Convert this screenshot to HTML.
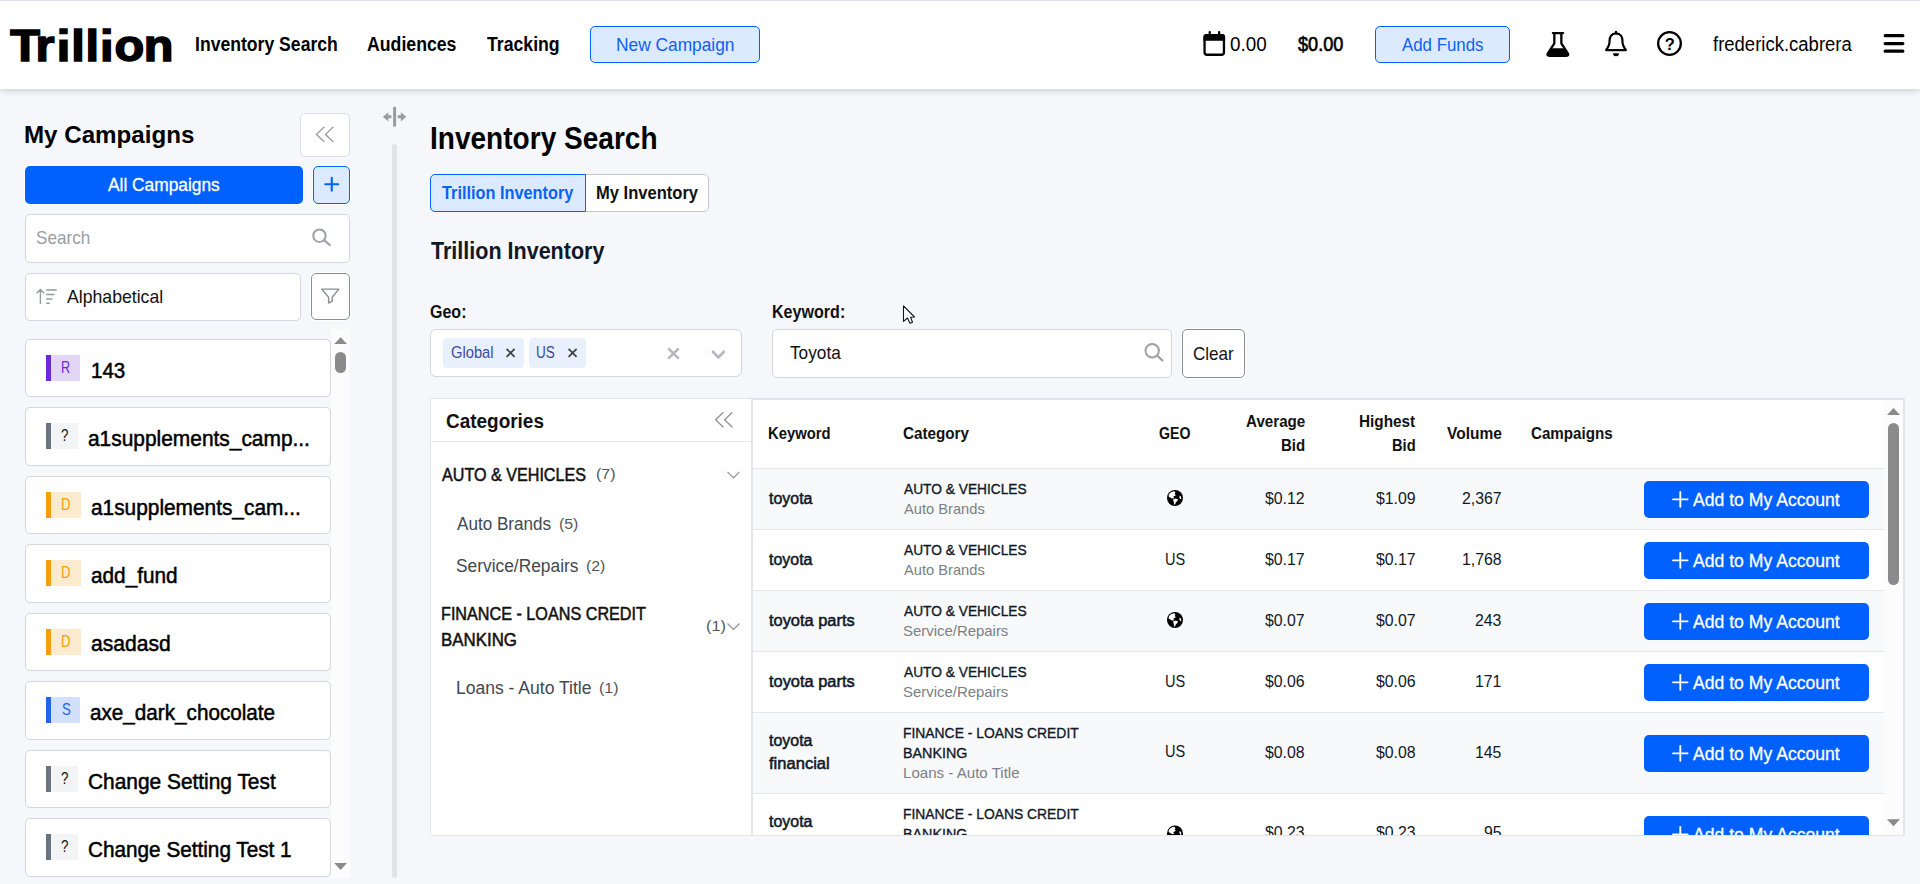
<!DOCTYPE html>
<html lang="en">
<head>
<meta charset="utf-8">
<title>Trillion - Inventory Search</title>
<style>
*{box-sizing:border-box;margin:0;padding:0}
html,body{width:1920px;height:884px;overflow:hidden}
body{background:#f5f7fb;font-family:"Liberation Sans",sans-serif;color:#000;position:relative}
.a{position:absolute}
.t{position:absolute;white-space:nowrap;line-height:1;transform-origin:0 0}
svg{position:absolute;overflow:visible}
.box{position:absolute;background:#fff;border:1px solid #d3d6dc;border-radius:5px}
.camp{position:absolute;left:25px;width:306px;height:58px;background:#fff;border:1px solid #d3d6dc;border-radius:5px}
.bar{position:absolute;left:45.75px;width:5.5px;height:26px}
.tag{position:absolute;left:51.25px;height:26px}
.row{position:absolute;left:753px;width:1131px;border-top:1px solid #e4e6eb}
.odd{background:#f8f9fb}
.even{background:#fff}
.ab{position:absolute;left:1644px;width:225px;height:37px;background:#0061ff;border-radius:5px}
</style>
</head>
<body>

<!-- ================= HEADER ================= -->
<div class="a" style="left:0;top:0;width:1920px;height:89px;background:#fff;border-top:1px solid #dfe0e5;box-shadow:0 0 8px rgba(0,0,0,.25)"></div>
<svg style="left:0;top:20px" width="180" height="50" viewBox="0 0 180 50">
  <text transform="scale(1.08 1)" x="9.49 32.96 52.6 65.9 79.17 92.5 106 133.2" y="41.1" font-family="Liberation Sans, sans-serif" font-weight="bold" font-size="45" fill="#000" stroke="#000" stroke-width="1.6" stroke-linejoin="miter">Trillion</text>
  <path d="M58 15.1H69.5V19.4H58zM101 15.1H112V19.4H101z" fill="#fff"/>
</svg>
<div class="a" style="left:590px;top:26px;width:170px;height:37px;border:1px solid #0061ff;background:#dbeafe;border-radius:5px"></div>
<div class="a" style="left:1375px;top:26px;width:135px;height:37px;border:1px solid #0061ff;background:#dbeafe;border-radius:5px"></div>

<!-- header icons -->
<svg style="left:1202px;top:30px" width="25" height="27" viewBox="0 0 25 27">
  <rect x="2.55" y="5.1" width="19.4" height="19.65" rx="2.6" fill="none" stroke="#000" stroke-width="2.3"/>
  <path d="M1.4 10.7V7a3 3 0 0 1 3-3H20.1a3 3 0 0 1 3 3v3.7z" fill="#000"/>
  <rect x="6.6" y="1" width="2.3" height="5" rx="1.1" fill="#000"/>
  <rect x="16" y="1" width="2.3" height="5" rx="1.1" fill="#000"/>
</svg>
<svg style="left:1545px;top:30px" width="26" height="28" viewBox="0 0 26 28">
  <path d="M7.9 3.05H18.1" stroke="#000" stroke-width="2.3" stroke-linecap="round" fill="none"/>
  <path d="M9.35 3.5V13.3L2.9 23.3Q1.6 25.75 4.4 25.75H21.3Q24.1 25.75 22.8 23.3L16.35 13.3V3.5" stroke="#000" stroke-width="2.3" stroke-linejoin="round" fill="none"/>
  <path d="M6.2 18.2H19.5L22.9 23.4Q24 25.8 21.3 25.8H4.4Q1.7 25.8 2.8 23.4Z" fill="#000"/>
</svg>
<svg style="left:1603px;top:30px" width="26" height="28" viewBox="0 0 26 28">
  <path d="M13 3.3C8.4 3.3 6.6 6.9 6.6 10.6C6.6 14.9 5.6 17.2 3.3 19.5V20.2H22.7V19.5C20.4 17.2 19.4 14.9 19.4 10.6C19.4 6.9 17.6 3.3 13 3.3Z" stroke="#000" stroke-width="2.2" stroke-linejoin="round" fill="none"/>
  <path d="M13 1.9V3.3" stroke="#000" stroke-width="2.4" stroke-linecap="round"/>
  <path d="M10 23.2H16A3 3 0 0 1 10 23.2Z" fill="#000"/>
</svg>
<svg style="left:1656px;top:30px" width="28" height="28" viewBox="0 0 28 28">
  <circle cx="13.5" cy="13.5" r="11.35" fill="none" stroke="#000" stroke-width="2.3"/>
</svg>
<svg style="left:1882px;top:32px" width="24" height="24" viewBox="0 0 24 24">
  <path d="M3.2 3.7H20.8M3.2 11.6H20.8M3.2 19.2H20.8" stroke="#000" stroke-width="3.3" stroke-linecap="round"/>
</svg>

<!-- ================= SIDEBAR ================= -->
<div class="box" style="left:300px;top:113px;width:50px;height:44px;border-color:#dcdfe4"></div>
<svg style="left:0;top:0" width="420" height="884" viewBox="0 0 420 884">
  <path d="M324.3 126.9L316.5 134.4L324.3 141.9M333.3 126.9L325.5 134.4L333.3 141.9" stroke="#8e9197" stroke-width="1.3" fill="none"/>
</svg>
<div class="a" style="left:25px;top:166px;width:278px;height:38px;background:#0061ff;border-radius:5px;box-shadow:0 0 0 1px rgba(255,255,255,.85)"></div>
<div class="a" style="left:313px;top:166px;width:37px;height:38px;background:#dbeafe;border:1px solid #0061ff;border-radius:5px;box-shadow:0 0 0 1px rgba(255,255,255,.85)"></div>
<svg style="left:0;top:0" width="420" height="884" viewBox="0 0 420 884">
  <path d="M325.3 184.3H338.2M331.75 177.9V190.8" stroke="#0061ff" stroke-width="2.1" stroke-linecap="round" fill="none"/>
</svg>
<div class="box" style="left:25px;top:214px;width:325px;height:48.5px"></div>
<svg style="left:0;top:0" width="420" height="884" viewBox="0 0 420 884">
  <circle cx="319.45" cy="235.7" r="6.2" fill="none" stroke="#9ea1a7" stroke-width="2"/>
  <path d="M323.9 240.1L329.8 245" stroke="#9ea1a7" stroke-width="2.2" stroke-linecap="round"/>
</svg>
<div class="box" style="left:25px;top:273px;width:276px;height:48px"></div>
<svg style="left:0;top:0" width="420" height="884" viewBox="0 0 420 884">
  <path d="M40.4 289.6V303.9M36.7 293.3L40.4 289.6L44.1 293.3M46.2 290H56.7M46.2 294.5H54.5M46.2 299H52.4M46.2 303.3H49.8" stroke="#979aa0" stroke-width="1.4" fill="none"/>
</svg>
<div class="box" style="left:311px;top:273px;width:39px;height:47px;border-color:#8a8d93;box-shadow:0 0 0 1px rgba(255,255,255,.85)"></div>
<svg style="left:0;top:0" width="420" height="884" viewBox="0 0 420 884">
  <path d="M321.7 289.1H338.9L332.2 297.2V301.2L328.6 303V297.2Z" stroke="#8b8e94" stroke-width="1.4" stroke-linejoin="round" fill="none"/>
</svg>

<!-- list scrollbar -->
<div class="a" style="left:331.25px;top:329.25px;width:18.25px;height:548.25px;background:#fcfcfc"></div>
<div class="a" style="left:335px;top:351.75px;width:11.25px;height:21.25px;background:#8a8a8a;border-radius:6px"></div>
<svg style="left:0;top:0" width="420" height="884" viewBox="0 0 420 884">
  <path d="M334.25 344H347L340.6 337.25Z" fill="#8a8a8a"/>
  <path d="M334.25 863H347L340.6 870Z" fill="#8a8a8a"/>
</svg>

<div class="camp" style="top:339px"></div>
<div class="camp" style="top:407px;height:59px"></div>
<div class="camp" style="top:476px"></div>
<div class="camp" style="top:544px;height:59px"></div>
<div class="camp" style="top:613px"></div>
<div class="camp" style="top:681px;height:59px"></div>
<div class="camp" style="top:750px"></div>
<div class="camp" style="top:818px;height:59px"></div>

<div class="bar" style="top:355px;background:#6d28d9"></div><div class="tag" style="top:355px;width:28.75px;background:#e2d6f7"></div>
<div class="bar" style="top:423px;background:#6b7280"></div><div class="tag" style="top:423px;width:26.75px;background:#f3f4f6"></div>
<div class="bar" style="top:491.75px;background:#f59e0b"></div><div class="tag" style="top:491.75px;width:29.5px;background:#fdebd0"></div>
<div class="bar" style="top:560.25px;background:#f59e0b"></div><div class="tag" style="top:560.25px;width:29.5px;background:#fdebd0"></div>
<div class="bar" style="top:629px;background:#f59e0b"></div><div class="tag" style="top:629px;width:29.5px;background:#fdebd0"></div>
<div class="bar" style="top:697px;background:#2563eb"></div><div class="tag" style="top:697px;width:28.75px;background:#d3e0fb"></div>
<div class="bar" style="top:766px;background:#6b7280"></div><div class="tag" style="top:766px;width:26.75px;background:#f3f4f6"></div>
<div class="bar" style="top:834px;background:#6b7280"></div><div class="tag" style="top:834px;width:26.75px;background:#f3f4f6"></div>

<!-- splitter -->
<div class="a" style="left:392px;top:144px;width:5px;height:734px;background:#e3e3e6;border-radius:2.5px"></div>
<svg style="left:0;top:0" width="420" height="884" viewBox="0 0 420 884">
  <rect x="393.1" y="106.8" width="3" height="20" rx="1.2" fill="#9b9b9b"/>
  <path d="M382.9 116.8L388.3 112.2V115.3H391.4V118.3H388.3V121.4Z" fill="#9b9b9b"/>
  <path d="M406.3 116.8L400.9 112.2V115.3H397.8V118.3H400.9V121.4Z" fill="#9b9b9b"/>
</svg>

<!-- ================= MAIN ================= -->
<div class="a" style="left:585px;top:174.25px;width:124px;height:37.5px;background:#fff;border:1px solid #c4c7cd;border-radius:0 5px 5px 0"></div>
<div class="a" style="left:430px;top:174.25px;width:155.5px;height:37.5px;background:#dbeafe;border:1px solid #0061ff;border-radius:5px 0 0 5px"></div>

<div class="box" style="left:430px;top:329px;width:312px;height:48px;border-radius:6px"></div>
<div class="a" style="left:443px;top:338px;width:80.75px;height:30px;background:#e9f0fd;border-radius:4px"></div>
<div class="a" style="left:529.25px;top:338px;width:56.5px;height:30px;background:#e9f0fd;border-radius:4px"></div>
<div class="box" style="left:772px;top:329px;width:400px;height:48.5px"></div>
<div class="box" style="left:1182px;top:329px;width:63px;height:49px;border-color:#8a8d93;box-shadow:0 0 0 1px rgba(255,255,255,.85)"></div>
<svg style="left:420px;top:320px" width="840" height="70" viewBox="420 320 840 70">
  <path d="M506.6 348.9L514.6 356.9M514.6 348.9L506.6 356.9M568.6 348.9L576.6 356.9M576.6 348.9L568.6 356.9" stroke="#3f4348" stroke-width="1.8" fill="none"/>
  <path d="M668.3 348.3L678.7 358.7M678.7 348.3L668.3 358.7" stroke="#b5b7bc" stroke-width="2.6" fill="none"/>
  <path d="M712.2 351L718.4 357.4L724.6 351" stroke="#b5b7bc" stroke-width="2.6" fill="none"/>
  <circle cx="1152.2" cy="350.7" r="6.7" fill="none" stroke="#9ea1a7" stroke-width="2"/>
  <path d="M1157 355.5L1162.4 360.4" stroke="#9ea1a7" stroke-width="2.2" stroke-linecap="round"/>
</svg>

<!-- table container -->
<div class="a" style="left:430px;top:398px;width:1475px;height:438px;background:#fff;border:1px solid #e3e5ea"></div>
<div class="a" style="left:751px;top:399px;width:1153px;height:436px;border:1px solid #e3e5ea;border-width:1px 1px 0 2px"></div>
<div class="a" style="left:431px;top:441px;width:320px;height:1px;background:#e4e6eb"></div>
<svg style="left:420px;top:390px" width="340" height="450" viewBox="420 390 340 450">
  <path d="M723.4 412.25L715.6 419.75L723.4 427.25M732.4 412.25L724.6 419.75L732.4 427.25" stroke="#8e9197" stroke-width="1.3" fill="none"/>
  <path d="M727.5 471.8L733.5 477.8L739.5 471.8M727.5 623.5L733.5 629.5L739.5 623.5" stroke="#8e9197" stroke-width="1.2" fill="none"/>
</svg>

<!-- rows -->
<div class="row odd" style="top:468px;height:61px"></div>
<div class="row even" style="top:529px;height:61px"></div>
<div class="row odd" style="top:590px;height:61px"></div>
<div class="row even" style="top:651px;height:61px"></div>
<div class="row odd" style="top:712px;height:81px"></div>
<div class="row even" style="top:793px;height:42px"></div>
<div class="ab" style="top:481px"></div>
<div class="ab" style="top:542px"></div>
<div class="ab" style="top:603px"></div>
<div class="ab" style="top:664px"></div>
<div class="ab" style="top:735px"></div>
<svg style="left:1640px;top:470px" width="240" height="370" viewBox="1640 470 240 370">
  <path d="M1673 499.35H1687.6M1680.3 492V506.7 M1673 560.35H1687.6M1680.3 553V567.7 M1673 621.35H1687.6M1680.3 614V628.7 M1673 682.35H1687.6M1680.3 675V689.7 M1673 753.35H1687.6M1680.3 746V760.7" stroke="#fff" stroke-width="1.9" stroke-linecap="round" fill="none"/>
</svg>
<!-- globes -->
<svg style="left:1165px;top:488px" width="20" height="20" viewBox="-10 -10 20 20"><g id="globe">
  <circle r="8" fill="#000"/>
  <path d="M-6.3 -1.5C-6.6 -4 -4 -6.6 -0.6 -6.7L0.5 -5.2L-0.4 -3.9L0.9 -2.7L-1.8 -1.2L-0.6 0.3L-3.2 0.6Z" fill="#fff"/>
  <path d="M-2 1.6L0.8 0.6L3 1.5L2.2 3.3L0.8 4.2L0 6.8L-0.8 6.6L-1.2 4Z" fill="#fff"/>
  <path d="M4.6 -2.6L5.9 -1.6L6.4 1L5.4 1.3L4.4 -0.6Z" fill="#fff"/>
</g></svg>
<svg style="left:1165px;top:610px" width="20" height="20" viewBox="-10 -10 20 20">
  <circle r="8" fill="#000"/>
  <path d="M-6.3 -1.5C-6.6 -4 -4 -6.6 -0.6 -6.7L0.5 -5.2L-0.4 -3.9L0.9 -2.7L-1.8 -1.2L-0.6 0.3L-3.2 0.6Z" fill="#fff"/>
  <path d="M-2 1.6L0.8 0.6L3 1.5L2.2 3.3L0.8 4.2L0 6.8L-0.8 6.6L-1.2 4Z" fill="#fff"/>
  <path d="M4.6 -2.6L5.9 -1.6L6.4 1L5.4 1.3L4.4 -0.6Z" fill="#fff"/>
</svg>

<div class="t" style="left:194.97px;top:34.00px;font-size:20px;font-weight:bold;transform:scaleX(0.8800)">Inventory Search</div>
<div class="t" style="left:366.97px;top:34.00px;font-size:20px;font-weight:bold;transform:scaleX(0.8843)">Audiences</div>
<div class="t" style="left:487.35px;top:34.00px;font-size:20px;font-weight:bold;transform:scaleX(0.8833)">Tracking</div>
<div class="t" style="left:615.95px;top:35.00px;font-size:19px;color:#0b62f5;transform:scaleX(0.9123)">New Campaign</div>
<div class="t" style="left:1230.42px;top:35.00px;font-size:19.5px;transform:scaleX(0.9647)">0.00</div>
<div class="t" style="left:1298.07px;top:35.00px;font-size:19.5px;-webkit-text-stroke:.6px currentColor;transform:scaleX(0.9297)">$0.00</div>
<div class="t" style="left:1401.85px;top:35.00px;font-size:19px;color:#0b62f5;transform:scaleX(0.8863)">Add Funds</div>
<div class="t" style="left:1712.78px;top:35.00px;font-size:19.5px;transform:scaleX(0.9486)">frederick.cabrera</div>
<div class="t" style="left:1664.80px;top:36.00px;font-size:16.5px;font-weight:bold;transform:scaleX(1.0000)">?</div>
<div class="t" style="left:23.89px;top:123.00px;font-size:24px;font-weight:bold;transform:scaleX(1.0057)">My Campaigns</div>
<div class="t" style="left:108.36px;top:175.00px;font-size:19px;color:#fff;-webkit-text-stroke:.3px currentColor;transform:scaleX(0.9121)">All Campaigns</div>
<div class="t" style="left:35.71px;top:228.00px;font-size:19px;color:#9b9ea5;transform:scaleX(0.9014)">Search</div>
<div class="t" style="left:66.62px;top:287.00px;font-size:19px;color:#111;transform:scaleX(0.9290)">Alphabetical</div>
<div class="t" style="left:91.18px;top:361.00px;font-size:21.5px;-webkit-text-stroke:.5px currentColor;transform:scaleX(0.9555)">143</div>
<div class="t" style="left:87.67px;top:429.00px;font-size:21.5px;-webkit-text-stroke:.5px currentColor;transform:scaleX(0.9722)">a1supplements_camp...</div>
<div class="t" style="left:90.67px;top:498.00px;font-size:21.5px;-webkit-text-stroke:.5px currentColor;transform:scaleX(0.9695)">a1supplements_cam...</div>
<div class="t" style="left:90.67px;top:566.00px;font-size:21.5px;-webkit-text-stroke:.5px currentColor;transform:scaleX(0.9657)">add_fund</div>
<div class="t" style="left:90.66px;top:634.00px;font-size:21.5px;-webkit-text-stroke:.5px currentColor;transform:scaleX(0.9806)">asadasd</div>
<div class="t" style="left:89.92px;top:703.00px;font-size:21.5px;-webkit-text-stroke:.5px currentColor;transform:scaleX(0.9619)">axe_dark_chocolate</div>
<div class="t" style="left:88.17px;top:772.00px;font-size:21.5px;-webkit-text-stroke:.5px currentColor;transform:scaleX(0.9714)">Change Setting Test</div>
<div class="t" style="left:88.17px;top:840.00px;font-size:21.5px;-webkit-text-stroke:.5px currentColor;transform:scaleX(0.9642)">Change Setting Test 1</div>
<div class="t" style="left:61.34px;top:359.00px;font-size:16.5px;color:#6d28d9;transform:scaleX(0.7685)">R</div>
<div class="t" style="left:60.52px;top:427.00px;font-size:16.5px;color:#111;transform:scaleX(0.8068)">?</div>
<div class="t" style="left:61.32px;top:496.00px;font-size:16.5px;color:#f59e0b;transform:scaleX(0.7963)">D</div>
<div class="t" style="left:61.32px;top:564.00px;font-size:16.5px;color:#f59e0b;transform:scaleX(0.7963)">D</div>
<div class="t" style="left:61.32px;top:633.00px;font-size:16.5px;color:#f59e0b;transform:scaleX(0.7963)">D</div>
<div class="t" style="left:61.52px;top:701.00px;font-size:16.5px;color:#2563eb;transform:scaleX(0.7959)">S</div>
<div class="t" style="left:60.52px;top:770.00px;font-size:16.5px;color:#111;transform:scaleX(0.8068)">?</div>
<div class="t" style="left:60.52px;top:838.00px;font-size:16.5px;color:#111;transform:scaleX(0.8068)">?</div>
<div class="t" style="left:430.30px;top:122.00px;font-size:32px;font-weight:bold;transform:scaleX(0.8764)">Inventory Search</div>
<div class="t" style="left:442.10px;top:184.00px;font-size:18.5px;font-weight:bold;color:#0b62f5;transform:scaleX(0.8812)">Trillion Inventory</div>
<div class="t" style="left:595.71px;top:184.00px;font-size:18.5px;font-weight:bold;color:#111;transform:scaleX(0.8941)">My Inventory</div>
<div class="t" style="left:431.05px;top:239.00px;font-size:24.5px;font-weight:bold;color:#111827;transform:scaleX(0.8787)">Trillion Inventory</div>
<div class="t" style="left:429.97px;top:303.00px;font-size:18px;font-weight:bold;color:#111;transform:scaleX(0.8892)">Geo:</div>
<div class="t" style="left:772.46px;top:303.00px;font-size:18px;font-weight:bold;color:#111;transform:scaleX(0.8929)">Keyword:</div>
<div class="t" style="left:450.70px;top:345.00px;font-size:16px;color:#3b4ba3;transform:scaleX(0.9208)">Global</div>
<div class="t" style="left:536.49px;top:345.00px;font-size:16px;color:#3b4ba3;transform:scaleX(0.8486)">US</div>
<div class="t" style="left:789.61px;top:343.00px;font-size:19px;color:#111;transform:scaleX(0.9067)">Toyota</div>
<div class="t" style="left:1193.21px;top:344.00px;font-size:19px;color:#111;transform:scaleX(0.8984)">Clear</div>
<div class="t" style="left:445.67px;top:412.00px;font-size:19.5px;font-weight:bold;color:#111;transform:scaleX(0.9719)">Categories</div>
<div class="t" style="left:441.62px;top:467.00px;font-size:17.5px;color:#111;-webkit-text-stroke:.5px currentColor;transform:scaleX(0.9216)">AUTO &amp; VEHICLES</div>
<div class="t" style="left:595.61px;top:466.00px;font-size:15px;color:#555;transform:scaleX(1.0714)">(7)</div>
<div class="t" style="left:456.64px;top:516.00px;font-size:17.5px;color:#414850;transform:scaleX(0.9762)">Auto Brands</div>
<div class="t" style="left:558.62px;top:516.00px;font-size:15px;color:#555;transform:scaleX(1.0565)">(5)</div>
<div class="t" style="left:455.66px;top:558.00px;font-size:17.5px;color:#414850;transform:scaleX(0.9914)">Service/Repairs</div>
<div class="t" style="left:586.12px;top:558.00px;font-size:15px;color:#555;transform:scaleX(1.0565)">(2)</div>
<div class="t" style="left:440.70px;top:606.00px;font-size:17.5px;color:#111;-webkit-text-stroke:.5px currentColor;transform:scaleX(0.9243)">FINANCE - LOANS CREDIT</div>
<div class="t" style="left:440.67px;top:632.00px;font-size:17.5px;color:#111;-webkit-text-stroke:.5px currentColor;transform:scaleX(0.9640)">BANKING</div>
<div class="t" style="left:706.10px;top:618.00px;font-size:15px;color:#555;transform:scaleX(1.0863)">(1)</div>
<div class="t" style="left:455.65px;top:680.00px;font-size:17.5px;color:#414850;transform:scaleX(1.0015)">Loans - Auto Title</div>
<div class="t" style="left:598.86px;top:680.00px;font-size:15px;color:#555;transform:scaleX(1.0714)">(1)</div>
<div class="t" style="left:767.70px;top:426.00px;font-size:16px;font-weight:bold;color:#111;transform:scaleX(0.9244)">Keyword</div>
<div class="t" style="left:903.18px;top:426.00px;font-size:16px;font-weight:bold;color:#111;transform:scaleX(0.9520)">Category</div>
<div class="t" style="left:1159.47px;top:426.00px;font-size:16px;font-weight:bold;color:#111;transform:scaleX(0.8836)">GEO</div>
<div class="t" style="left:1245.88px;top:414.00px;font-size:16px;font-weight:bold;color:#111;transform:scaleX(0.9475)">Average</div>
<div class="t" style="left:1281.19px;top:438.00px;font-size:16px;font-weight:bold;color:#111;transform:scaleX(0.9375)">Bid</div>
<div class="t" style="left:1358.93px;top:414.00px;font-size:16px;font-weight:bold;color:#111;transform:scaleX(0.9566)">Highest</div>
<div class="t" style="left:1392.45px;top:438.00px;font-size:16px;font-weight:bold;color:#111;transform:scaleX(0.9173)">Bid</div>
<div class="t" style="left:1446.64px;top:426.00px;font-size:16px;font-weight:bold;color:#111;transform:scaleX(0.9683)">Volume</div>
<div class="t" style="left:1531.43px;top:426.00px;font-size:16px;font-weight:bold;color:#111;transform:scaleX(0.9470)">Campaigns</div>
<div class="t" style="left:768.64px;top:490.00px;font-size:16.5px;color:#111827;-webkit-text-stroke:.55px currentColor;transform:scaleX(0.9662)">toyota</div>
<div class="t" style="left:904.12px;top:481.00px;font-size:15px;color:#111827;-webkit-text-stroke:.35px currentColor;transform:scaleX(0.9162)">AUTO &amp; VEHICLES</div>
<div class="t" style="left:904.14px;top:501.00px;font-size:15px;color:#7b7f86;transform:scaleX(0.9783)">Auto Brands</div>
<div class="t" style="left:1265.00px;top:491.00px;font-size:16px;color:#111827;transform:scaleX(0.9900)">$0.12</div>
<div class="t" style="left:1376.00px;top:491.00px;font-size:16px;color:#111827;transform:scaleX(0.9900)">$1.09</div>
<div class="t" style="left:1461.50px;top:491.00px;font-size:16px;color:#111827;transform:scaleX(0.9900)">2,367</div>
<div class="t" style="left:1693.37px;top:490.00px;font-size:19px;color:#fff;-webkit-text-stroke:.3px currentColor;transform:scaleX(0.9262)">Add to My Account</div>
<div class="t" style="left:768.64px;top:551.00px;font-size:16.5px;color:#111827;-webkit-text-stroke:.55px currentColor;transform:scaleX(0.9662)">toyota</div>
<div class="t" style="left:904.12px;top:542.00px;font-size:15px;color:#111827;-webkit-text-stroke:.35px currentColor;transform:scaleX(0.9162)">AUTO &amp; VEHICLES</div>
<div class="t" style="left:904.14px;top:562.00px;font-size:15px;color:#7b7f86;transform:scaleX(0.9783)">Auto Brands</div>
<div class="t" style="left:1165.16px;top:552.00px;font-size:16px;color:#111827;transform:scaleX(0.9083)">US</div>
<div class="t" style="left:1265.00px;top:552.00px;font-size:16px;color:#111827;transform:scaleX(0.9900)">$0.17</div>
<div class="t" style="left:1376.00px;top:552.00px;font-size:16px;color:#111827;transform:scaleX(0.9900)">$0.17</div>
<div class="t" style="left:1461.50px;top:552.00px;font-size:16px;color:#111827;transform:scaleX(0.9900)">1,768</div>
<div class="t" style="left:1693.37px;top:551.00px;font-size:19px;color:#fff;-webkit-text-stroke:.3px currentColor;transform:scaleX(0.9262)">Add to My Account</div>
<div class="t" style="left:768.65px;top:612.00px;font-size:16.5px;color:#111827;-webkit-text-stroke:.55px currentColor;transform:scaleX(0.9937)">toyota parts</div>
<div class="t" style="left:904.12px;top:603.00px;font-size:15px;color:#111827;-webkit-text-stroke:.35px currentColor;transform:scaleX(0.9162)">AUTO &amp; VEHICLES</div>
<div class="t" style="left:903.15px;top:623.00px;font-size:15px;color:#7b7f86;transform:scaleX(0.9948)">Service/Repairs</div>
<div class="t" style="left:1265.00px;top:613.00px;font-size:16px;color:#111827;transform:scaleX(0.9900)">$0.07</div>
<div class="t" style="left:1376.00px;top:613.00px;font-size:16px;color:#111827;transform:scaleX(0.9900)">$0.07</div>
<div class="t" style="left:1475.36px;top:613.00px;font-size:16px;color:#111827;transform:scaleX(0.9900)">243</div>
<div class="t" style="left:1693.37px;top:612.00px;font-size:19px;color:#fff;-webkit-text-stroke:.3px currentColor;transform:scaleX(0.9262)">Add to My Account</div>
<div class="t" style="left:768.65px;top:673.00px;font-size:16.5px;color:#111827;-webkit-text-stroke:.55px currentColor;transform:scaleX(0.9937)">toyota parts</div>
<div class="t" style="left:904.12px;top:664.00px;font-size:15px;color:#111827;-webkit-text-stroke:.35px currentColor;transform:scaleX(0.9162)">AUTO &amp; VEHICLES</div>
<div class="t" style="left:903.15px;top:684.00px;font-size:15px;color:#7b7f86;transform:scaleX(0.9948)">Service/Repairs</div>
<div class="t" style="left:1165.16px;top:674.00px;font-size:16px;color:#111827;transform:scaleX(0.9083)">US</div>
<div class="t" style="left:1265.00px;top:674.00px;font-size:16px;color:#111827;transform:scaleX(0.9900)">$0.06</div>
<div class="t" style="left:1376.00px;top:674.00px;font-size:16px;color:#111827;transform:scaleX(0.9900)">$0.06</div>
<div class="t" style="left:1475.36px;top:674.00px;font-size:16px;color:#111827;transform:scaleX(0.9900)">171</div>
<div class="t" style="left:1693.37px;top:673.00px;font-size:19px;color:#fff;-webkit-text-stroke:.3px currentColor;transform:scaleX(0.9262)">Add to My Account</div>
<div class="t" style="left:768.64px;top:732.00px;font-size:16.5px;color:#111827;-webkit-text-stroke:.55px currentColor;transform:scaleX(0.9662)">toyota</div>
<div class="t" style="left:768.65px;top:755.00px;font-size:16.5px;color:#111827;-webkit-text-stroke:.55px currentColor;transform:scaleX(1.0033)">financial</div>
<div class="t" style="left:903.20px;top:725.00px;font-size:15px;color:#111827;-webkit-text-stroke:.35px currentColor;transform:scaleX(0.9247)">FINANCE - LOANS CREDIT</div>
<div class="t" style="left:903.18px;top:745.00px;font-size:15px;color:#111827;-webkit-text-stroke:.35px currentColor;transform:scaleX(0.9543)">BANKING</div>
<div class="t" style="left:903.15px;top:765.00px;font-size:15px;color:#7b7f86;transform:scaleX(1.0061)">Loans - Auto Title</div>
<div class="t" style="left:1165.16px;top:744.00px;font-size:16px;color:#111827;transform:scaleX(0.9083)">US</div>
<div class="t" style="left:1265.00px;top:745.00px;font-size:16px;color:#111827;transform:scaleX(0.9900)">$0.08</div>
<div class="t" style="left:1376.00px;top:745.00px;font-size:16px;color:#111827;transform:scaleX(0.9900)">$0.08</div>
<div class="t" style="left:1475.36px;top:745.00px;font-size:16px;color:#111827;transform:scaleX(0.9900)">145</div>
<div class="t" style="left:1693.37px;top:744.00px;font-size:19px;color:#fff;-webkit-text-stroke:.3px currentColor;transform:scaleX(0.9262)">Add to My Account</div>

<!-- clipped last row -->
<div class="a" style="left:753px;top:794px;width:1131px;height:41px;overflow:hidden">
  <div class="ab" style="left:891px;top:22px"></div>
  <svg style="left:0;top:0" width="1131" height="60" viewBox="753 794 1131 60">
    <path d="M1673 834.35H1687.6M1680.3 827V841.7" stroke="#fff" stroke-width="1.9" stroke-linecap="round" fill="none"/>
    <g transform="translate(1175 833.5)">
      <circle r="8" fill="#000"/>
      <path d="M-6.3 -1.5C-6.6 -4 -4 -6.6 -0.6 -6.7L0.5 -5.2L-0.4 -3.9L0.9 -2.7L-1.8 -1.2L-0.6 0.3L-3.2 0.6Z" fill="#fff"/>
      <path d="M4.6 -2.6L5.9 -1.6L6.4 1L5.4 1.3L4.4 -0.6Z" fill="#fff"/>
    </g>
  </svg>
<div class="t" style="left:15.64px;top:19.00px;font-size:16.5px;color:#111827;-webkit-text-stroke:.55px currentColor;transform:scaleX(0.9662)">toyota</div>
<div class="t" style="left:150.20px;top:12.00px;font-size:15px;color:#111827;-webkit-text-stroke:.35px currentColor;transform:scaleX(0.9247)">FINANCE - LOANS CREDIT</div>
<div class="t" style="left:150.18px;top:32.00px;font-size:15px;color:#111827;-webkit-text-stroke:.35px currentColor;transform:scaleX(0.9543)">BANKING</div>
<div class="t" style="left:512.00px;top:31.00px;font-size:16px;color:#111827;transform:scaleX(0.9900)">$0.23</div>
<div class="t" style="left:623.00px;top:31.00px;font-size:16px;color:#111827;transform:scaleX(0.9900)">$0.23</div>
<div class="t" style="left:731.27px;top:31.00px;font-size:16px;color:#111827;transform:scaleX(0.9900)">95</div>
<div class="t" style="left:940.37px;top:31.00px;font-size:19px;color:#fff;-webkit-text-stroke:.3px currentColor;transform:scaleX(0.9262)">Add to My Account</div>
</div>

<!-- table scrollbar -->
<div class="a" style="left:1884px;top:400px;width:19px;height:435px;background:#fcfcfc"></div>
<div class="a" style="left:1888px;top:423px;width:11px;height:162px;background:#8b8b8b;border-radius:6px"></div>
<svg style="left:1880px;top:400px" width="30" height="440" viewBox="1880 400 30 440">
  <path d="M1887 415H1900L1893.5 408Z" fill="#8a8a8a"/>
  <path d="M1887 819.25H1900L1893.5 826.25Z" fill="#8a8a8a"/>
</svg>

<svg style="left:895px;top:300px" width="30" height="30" viewBox="895 300 30 30">
  <path d="M903.5 305.8V321.4L907.5 318L910 323.3L912.5 322.3L910.6 317.3L914.5 317Z" fill="#fff" stroke="#14141f" stroke-width="1.1" stroke-linejoin="round"/>
</svg>
</body>
</html>
